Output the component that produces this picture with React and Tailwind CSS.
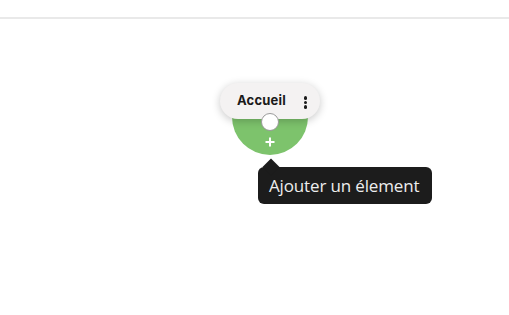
export default function App() {
  return (
    <div className="relative w-[509px] h-[315px] bg-white overflow-hidden" style={{ fontFamily: "'Open Sans', 'Noto Sans', sans-serif" }}>
      <div className="h-[19px] border-b-2 border-[#e9e9e9]" />
      {/* node */}
      <div className="absolute left-[232px] top-[116px] w-[76px] h-[39px] rounded-b-full bg-[#7dc36c]" />
      <div className="absolute left-[220px] top-[83px] w-[100px] h-[36px] rounded-full bg-[#f4f2f2] shadow-[0_2px_8px_rgba(0,0,0,0.22)] flex items-center pl-[17px]">
        <span className="text-[13px] font-bold text-[#1a1a1a] tracking-[0.2px]" style={{ fontFamily: "Inter, 'Noto Sans', sans-serif" }}>Accueil</span>
        <div className="ml-auto mr-[13px] mt-[3px] flex flex-col gap-[1px]">
          <span className="w-[3.5px] h-[3.5px] rounded-full bg-[#1a1a1a]" />
          <span className="w-[3.5px] h-[3.5px] rounded-full bg-[#1a1a1a]" />
          <span className="w-[3.5px] h-[3.5px] rounded-full bg-[#1a1a1a]" />
        </div>
      </div>
      <div className="absolute left-[261px] top-[113px] w-[18px] h-[18px] rounded-full bg-white border border-[#9a9a9a]" />
      <svg className="absolute left-[265px] top-[137px]" width="10" height="10" viewBox="0 0 10 10">
        <path d="M5 0.5V9.5M0.5 5H9.5" stroke="white" strokeWidth="2" />
      </svg>
      {/* tooltip */}
      <div className="absolute left-[258px] top-[167px] w-[174px] h-[37px] rounded-[6px] bg-[#1c1c1c] flex items-center pl-[11px]">
        <div className="absolute left-[7px] top-[-6px] w-[12px] h-[12px] bg-[#1c1c1c] rotate-45" />
        <span className="relative text-[17px] font-medium text-[#ededed] tracking-[-0.15px]">Ajouter un élement</span>
      </div>
    </div>
  );
}
